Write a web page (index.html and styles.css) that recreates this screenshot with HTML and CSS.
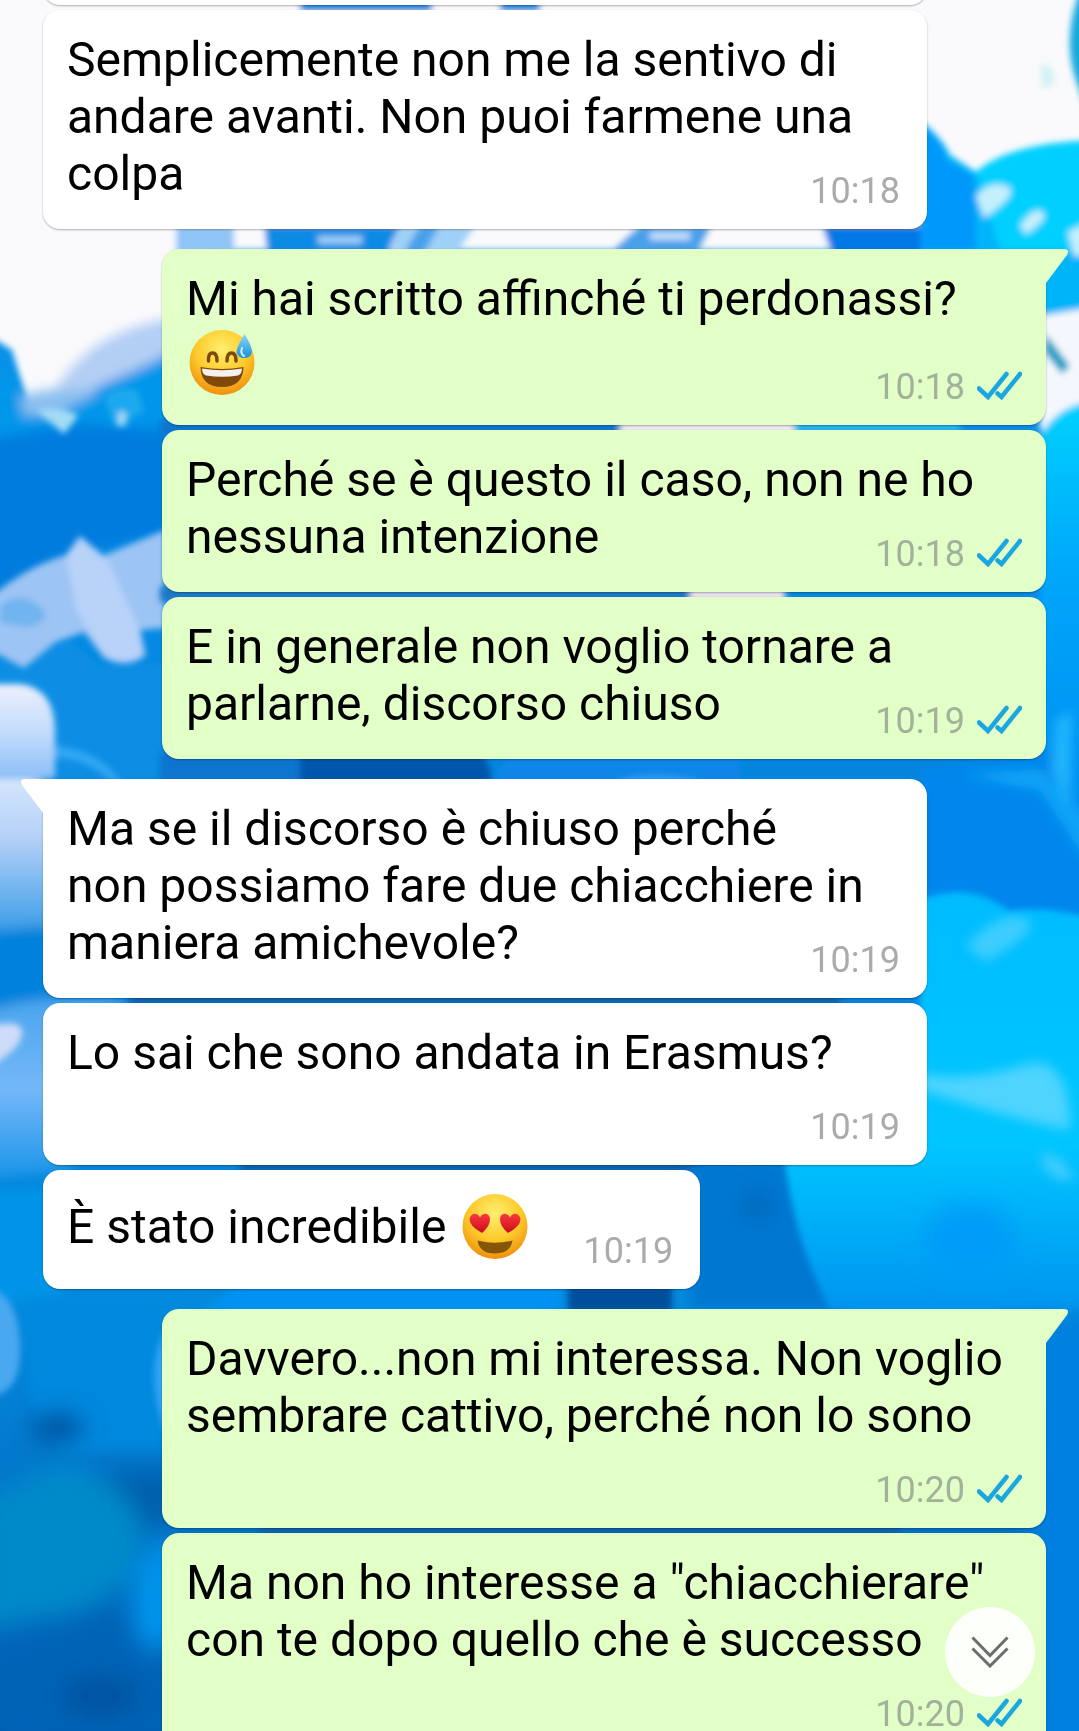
FILE: index.html
```
<!DOCTYPE html>
<html lang="it">
<head>
<meta charset="utf-8">
<meta name="viewport" content="width=device-width, initial-scale=1">
<title>Chat</title>
<link rel="stylesheet" href="styles.css">
</head>
<body>
<svg class="wallpaper" viewBox="0 0 1079 1731" preserveAspectRatio="none" aria-hidden="true">
  <defs>
    <linearGradient id="sea" x1="0" y1="0" x2="0" y2="1">
      <stop offset="0" stop-color="#0a9cf2"/>
      <stop offset=".5" stop-color="#0482dc"/>
      <stop offset=".75" stop-color="#038ade"/>
      <stop offset="1" stop-color="#025cb0"/>
    </linearGradient>
    <linearGradient id="pod" x1="0" y1="0" x2="0" y2="1">
      <stop offset="0" stop-color="#eef0fc"/>
      <stop offset=".5" stop-color="#c4dcfc"/>
      <stop offset="1" stop-color="#8cc0f6"/>
    </linearGradient>
    <linearGradient id="leftPetal" x1="0" y1="0" x2="0" y2="1">
      <stop offset="0" stop-color="#d8e8fc"/>
      <stop offset=".4" stop-color="#b4d0f8"/>
      <stop offset="1" stop-color="#2f98e6"/>
    </linearGradient>
    <linearGradient id="lowPetal" x1="0" y1="0" x2="0" y2="1">
      <stop offset="0" stop-color="#4aa4ee"/>
      <stop offset=".5" stop-color="#74b8f8"/>
      <stop offset="1" stop-color="#1894e8"/>
    </linearGradient>
    <linearGradient id="rightEdge" x1="0" y1="0" x2="0" y2="1">
      <stop offset="0" stop-color="#00d2ff"/>
      <stop offset=".35" stop-color="#00a6fa"/>
      <stop offset="1" stop-color="#0084ec"/>
    </linearGradient>
    <linearGradient id="cloud" x1="0" y1="0" x2="0" y2="1">
      <stop offset="0" stop-color="#00bcff"/>
      <stop offset=".6" stop-color="#00c6ff"/>
      <stop offset="1" stop-color="#0094f0"/>
    </linearGradient>
    <filter id="soft" x="-20%" y="-20%" width="140%" height="140%"><feGaussianBlur stdDeviation="3"/></filter>
    <filter id="mist" x="-20%" y="-20%" width="140%" height="140%"><feGaussianBlur stdDeviation="6"/></filter>
    <filter id="haze" x="-40%" y="-40%" width="180%" height="180%"><feGaussianBlur stdDeviation="12"/></filter>
  </defs>
  <rect width="1079" height="1731" fill="url(#sea)"/>

  <!-- white sky and the splashes under it -->
  <g filter="url(#soft)">
    <path fill="#fafafc" d="M-20-20H1100V250H-20z"/>
    <path fill="#fafafc" d="M-20 200H240L165 330 100 355 78 400 30 410 12 350-20 330z"/>
    <path fill="#0a8ae6" d="M300-10H432V12H300zM500-10H540V12H500z"/>
    <path fill="#8fc4f6" d="M176 225H234V255H176z"/>
    <path fill="#0a8ae6" d="M264 225H400L385 260H268z"/>
    <path fill="#9fd0f8" d="M318 236H362V244H318zM400 225H476L452 260H388z"/>
    <path fill="#4aa0ea" d="M420 225H440L420 260H400zM610 252L640 225H712L694 260z"/>
    <path fill="#c5e0fa" d="M650 232H690V240H650z"/>
    <path fill="#0078e6" d="M822 225H930V255H832z"/>
  </g>

  <!-- left column: foam line and the blue under it -->
  <g filter="url(#mist)">
    <path fill="#b4cff4" d="M50 400C74 350 120 325 175 318V370L80 412z"/>
    <path fill="#0496ea" d="M34 416C70 396 120 380 175 350V470H-20V356C14 370 20 400 34 416z"/>
    <path fill="#8cc0f0" d="M20 396Q60 384 100 392L60 412 24 416z"/>
    <path fill="#007cde" d="M-20 440L80 424 175 430V534L90 550 0 600H-20z"/>
    <path fill="#088ee4" d="M-20 665L70 640 100 665 165 662V780H-20z"/>
    <path fill="url(#leftPetal)" d="M-20 772H34L60 812V930L-20 940z"/>
    <path fill="#0482dc" d="M-20 932L50 926V1000L-20 1012z"/>
    <path fill="url(#lowPetal)" d="M-20 1014Q40 992 125 1000L70 1170-20 1180z"/>
    <path fill="#0494e8" d="M-20 1190H60V1300H-20z"/>
    <path fill="#0489de" d="M26 1296H165V1450L60 1450 30 1400z"/>
  </g>
  <g filter="url(#soft)">
    <path fill="#1aa8ee" d="M104 398q12-14 34-8l6 22-30 14z"/>
    <path fill="#a4dcf6" d="M36 410q24-6 42 6l-14 18zM118 412h8v14h-8z"/>
    <path fill="#9cc4f4" d="M-20 606C20 570 50 560 66 555L80 536 98 558 165 530V628L140 630 146 655Q128 670 104 658L84 632 56 642 24 668-20 645z"/>
    <path fill="#b8d2f8" d="M66 556L80 536 108 560 140 630 142 656Q124 668 104 656L76 610z"/>
    <path fill="#70b4f0" d="M0 605q20-14 38 0t-10 22l-28-4z"/>
    <path fill="#30a8f4" d="M56 746q44 4 66 38h-8q-26-26-58-26z"/>
    <path fill="url(#pod)" d="M-20 684H20Q54 688 55 730V778H-20z"/>
    <path fill="#cddcf8" d="M-10 1026Q24 1018 22 1034T-10 1066z"/>
    <path fill="#4aa8f0" d="M-10 1288Q18 1296 20 1345T-10 1396z"/>
    <path fill="#32a4f6" d="M168 1325Q140 1370 168 1440z"/>
  </g>
  <g filter="url(#haze)">
    <ellipse cx="58" cy="1428" rx="26" ry="14" fill="#01509c"/>
    <path fill="#0260ae" d="M100 1470H180V1530H140z"/>
    <path fill="#008aca" d="M-20 1500L60 1464Q150 1490 140 1550T20 1620L-20 1630z"/>
    <path fill="#0264b6" d="M-20 1660L120 1600 175 1740H-20z"/>
    <ellipse cx="100" cy="1696" rx="40" ry="22" fill="#0054a2"/>
    <path fill="#0296ee" d="M175 1530Q130 1560 134 1610T175 1646z"/>
  </g>

  <!-- gaps between the bubbles -->
  <g filter="url(#soft)">
    <path fill="#0a74cc" d="M160 420H620V436H160z"/>
    <path fill="#f0e8f4" d="M620 418H794V436H620z"/>
    <path fill="#20b4f0" d="M794 420H960V436H794z"/>
    <path fill="#1c78c8" d="M160 586H690V602H160z"/>
    <path fill="#ece4f0" d="M690 586H785V602H690z"/>
    <path fill="#0874d0" d="M160 752H300V786H160z"/>
    <path fill="#0556aa" d="M300 752H480Q495 770 490 786H300z"/>
    <path fill="#0c86e8" d="M495 786Q500 752 530 752H740V786z"/>
    <path fill="#2a9cf4" d="M606 786Q650 764 716 786z"/>
    <path fill="#0a66b4" d="M130 994H840V1008H130z"/>
    <path fill="#0a62ae" d="M240 1161H700V1174H240z"/>
    <path fill="#0492f2" d="M240 1285H560V1312H200z"/>
    <path fill="#04509c" d="M568 1284H672V1312H568z"/>
    <path fill="#0492f0" d="M830 1284H1000V1312H830z"/>
    <path fill="#0a62ae" d="M260 1524H900V1536H260z"/>
  </g>

  <!-- right column -->
  <g filter="url(#soft)">
    <path fill="#00b4fa" d="M920 120Q944 140 950 155L976 172Q1010 142 1100 140V330H920z"/>
    <path fill="#00d0ff" d="M976 172Q1010 142 1100 140V250L1000 250z"/>
    <path fill="#0698fa" d="M920 124Q944 140 946 160L974 176 976 250H920z"/>
    <path fill="#12a8dc" d="M1100-10H1080Q1062 40 1076 80T1100 150z"/>
    <path fill="#c4f0fc" d="M976 196Q990 180 1006 186T984 218zM1020 226Q1034 206 1042 212T1026 234zM1068 232l20-10v34h-14z"/>
    <path fill="#d6f2f6" d="M1040 66q10-6 14 8t-12 14z"/>
    <path fill="#f4f8fe" d="M1040 316L1100 306V400L1050 430H1040z"/>
    <path fill="#14a0c8" d="M1046 334L1070 366 1062 374 1044 352z"/>
    <path fill="url(#rightEdge)" d="M1040 435Q1060 402 1100 400V900H1040z"/>
  </g>
  <g filter="url(#mist)">
    <path fill="#0686ec" d="M920 770L1050 750 1100 850V920H920z"/>
    <path fill="#10a4f8" d="M960 774L1040 790 1100 880V830L1040 770z"/>
    <path fill="#20b6fc" d="M1056 720L1072 710 1070 810 1052 770z"/>
    <path fill="#0578d2" d="M690 1160H800L840 1310H690z"/>
  </g>
  <g filter="url(#soft)">
    <path fill="url(#cloud)" d="M830 1310Q790 1230 784 1150L920 1150V900Q970 880 1010 912 1040 904 1100 920V1310z"/>
  </g>
  <g filter="url(#mist)">
    <path fill="#3cceff" d="M966 946Q1000 910 1024 918T986 962z"/>
    <path fill="#50d4ff" d="M920 1074Q970 1082 1020 1066T1070 1130Q1030 1122 980 1108L920 1090z"/>
    <path fill="#40ccff" d="M1042 1152q26 6 32 28-20 4-32-16z"/>
  </g>
  <g filter="url(#haze)">
    <ellipse cx="970" cy="1240" rx="46" ry="36" fill="#009cf8"/>
    <ellipse cx="758" cy="1206" rx="14" ry="12" fill="#0462b0"/>
    <path fill="#0080e0" d="M1030 1320H1110V1760H1030z"/>
  </g>
</svg>

<svg class="sprites" aria-hidden="true">
  <symbol id="read" viewBox="0 0 45 29">
    <path d="M2 17.500L11 26 29.500 3M20.500 22.500L24.500 26 43 3" fill="none" stroke="#1aa6e0" stroke-width="4.500" stroke-linecap="round" stroke-linejoin="miter"/>
  </symbol>
</svg>

<main class="chat">
  <article class="bubble in previous"></article>

  <article class="bubble in">
    <p class="text">Semplicemente non me la sentivo di andare avanti. Non puoi farmene una colpa</p>
    <footer class="meta"><time>10:18</time></footer>
  </article>

  <article class="bubble out first">
    <svg class="tail" viewBox="0 0 22 34" aria-hidden="true"><path d="M0 0H18Q24 0 21 6L0 34z"/></svg>
    <p class="text">Mi hai scritto affinché ti perdonassi? <svg class="emoji" viewBox="0 0 71 71" role="img" aria-label="Sorriso con goccia di sudore">
      <defs>
        <radialGradient id="skin" cx=".5" cy=".3" r=".72">
          <stop offset="0" stop-color="#ffee70"/><stop offset=".55" stop-color="#fdcb2c"/><stop offset="1" stop-color="#ee8c0c"/>
        </radialGradient>
        <linearGradient id="drop" x1="0" y1="0" x2="0" y2="1"><stop offset="0" stop-color="#8fd8f8"/><stop offset="1" stop-color="#1690dc"/></linearGradient>
      </defs>
      <circle cx="36" cy="35.500" r="32.500" fill="url(#skin)"/>
      <path d="M22.500 34Q22 26 26.500 26T31 34M41 34Q41 26 45.500 26T50 34" fill="none" stroke="#7d4a08" stroke-width="3.500" stroke-linecap="round"/>
      <path d="M14.500 40Q36 44 57.500 40 57 60 36 60T14.500 40z" fill="#80490a"/>
      <path d="M16 41.500Q36 45 56 41.500 56 47 52 48.500 36 51 20 48.500 16 47 16 41.500z" fill="#f4f1ee"/>
      <path d="M58.500 7Q66 19 66 25A8 8 0 0 1 50.500 25Q51 19 58.500 7z" fill="url(#drop)"/>
      <path d="M56 21q-2 6 2 8" fill="none" stroke="#d2f2fe" stroke-width="2" stroke-linecap="round"/>
    </svg></p>
    <footer class="meta"><time>10:18</time><svg class="read" role="img" aria-label="Letto"><use href="#read"/></svg></footer>
  </article>

  <article class="bubble out">
    <p class="text">Perché se è questo il caso, non ne ho nessuna intenzione</p>
    <footer class="meta"><time>10:18</time><svg class="read" role="img" aria-label="Letto"><use href="#read"/></svg></footer>
  </article>

  <article class="bubble out">
    <p class="text">E in generale non voglio tornare a parlarne, discorso chiuso</p>
    <footer class="meta"><time>10:19</time><svg class="read" role="img" aria-label="Letto"><use href="#read"/></svg></footer>
  </article>

  <article class="bubble in first">
    <svg class="tail" viewBox="0 0 22 34" aria-hidden="true"><path d="M22 0H4Q-2 0 1 6L22 34z"/></svg>
    <p class="text">Ma se il discorso è chiuso perché<br>non possiamo fare due chiacchiere in maniera amichevole?</p>
    <footer class="meta"><time>10:19</time></footer>
  </article>

  <article class="bubble in">
    <p class="text">Lo sai che sono andata in Erasmus?</p>
    <footer class="meta"><time>10:19</time></footer>
  </article>

  <article class="bubble in">
    <p class="text">È stato incredibile <svg class="emoji" viewBox="0 0 71 71" role="img" aria-label="Occhi a cuore">
      <defs>
        <linearGradient id="heartFill" x1="0" y1="0" x2="0" y2="1"><stop offset="0" stop-color="#fb3a3c"/><stop offset="1" stop-color="#c80c1c"/></linearGradient>
      </defs>
      <circle cx="37" cy="35.500" r="32.500" fill="url(#skin)"/>
      <path d="M24 42Q11 35 11.500 27.500C13 21.500 20 21 22 26.500 25 20.500 32 22 32 28.500Q32 35 24 42z" fill="url(#heartFill)"/>
      <path d="M50 42Q63 35 62.500 27.500C61 21.500 54 21 52 26.500 49 20.500 42 22 42 28.500Q42 35 50 42z" fill="url(#heartFill)"/>
      <path d="M19.500 49.500Q37 54 54.500 49.500 52.500 62.500 37 62.500T19.500 49.500z" fill="#85550a"/>
    </svg></p>
    <footer class="meta"><time>10:19</time></footer>
  </article>

  <article class="bubble out first">
    <svg class="tail" viewBox="0 0 22 34" aria-hidden="true"><path d="M0 0H18Q24 0 21 6L0 34z"/></svg>
    <p class="text">Davvero...non mi interessa. Non voglio sembrare cattivo, perché non lo sono</p>
    <footer class="meta"><time>10:20</time><svg class="read" role="img" aria-label="Letto"><use href="#read"/></svg></footer>
  </article>

  <article class="bubble out">
    <p class="text">Ma non ho interesse a "chiacchierare" con te dopo quello che è successo</p>
    <footer class="meta"><time>10:20</time><svg class="read" role="img" aria-label="Letto"><use href="#read"/></svg></footer>
  </article>
</main>

<button class="to-bottom" type="button" aria-label="Vai in fondo">
  <svg viewBox="0 0 38 32" aria-hidden="true"><path d="M1.500 1.500L19 19.500 36.500 1.500M1.500 12.500L19 30 36.500 12.500" fill="none" stroke="#6b6f6b" stroke-width="3"/></svg>
</button>
</body>
</html>
```
FILE: styles.css
```
* {
  box-sizing: border-box;
}

body {
  margin: 0;
  background: #0682dc;
  color: #000;
  font-family: Roboto, "Noto Sans", sans-serif;
}

.wallpaper {
  position: fixed;
  inset: 0;
  width: 100%;
  height: 100%;
}

.sprites {
  display: none;
}

.chat {
  position: relative;
  display: flex;
  flex-direction: column;
  gap: 5px;
  height: 100vh;
  padding: 0 33px 0 43px;
  overflow: hidden;
}

.bubble {
  position: relative;
  display: grid;
  flex: none;
  max-width: calc(100% - 119px);
  padding: 21px 24px 24px;
  border-radius: 17px;
  box-shadow: 0 1px 2px rgba(0, 0, 0, 0.3);
}

.in {
  align-self: flex-start;
  padding-right: 27px;
  background: #fff;
}

.out {
  align-self: flex-end;
  background: #e1ffc7;
}

.previous {
  width: 100%;
  height: 48px;
  margin-top: -43px;
}

.first {
  margin-top: 15px;
}

.out.first {
  border-top-right-radius: 0;
}

.in.first {
  border-top-left-radius: 0;
}

.tail {
  position: absolute;
  top: 0;
  width: 22px;
  height: 34px;
}

.out .tail {
  left: 100%;
  fill: #e1ffc7;
}

.in .tail {
  right: 100%;
  fill: #fff;
}

.text {
  grid-area: 1 / 1;
  margin: 0;
  padding-bottom: 3px;
  font-size: 48px;
  line-height: 57px;
}

/* keeps the last line clear of the time stamp */
.text::after {
  content: "";
  display: inline-block;
  width: 144px;
}

.out .text::after {
  width: 190px;
}

.emoji {
  width: 71px;
  height: 71px;
  vertical-align: -19px;
}

.meta {
  grid-area: 1 / 1;
  place-self: end;
  display: flex;
  align-items: center;
  gap: 12px;
  height: 28px;
  color: #a9abad;
  font-size: 36px;
  line-height: 28px;
}

.out .meta {
  color: #a3b19b;
}

.read {
  width: 45px;
  height: 29px;
  margin-bottom: 4px;
}

.to-bottom {
  position: fixed;
  right: 44px;
  bottom: 34px;
  display: grid;
  place-items: center;
  width: 90px;
  height: 90px;
  padding: 0;
  border: 0;
  border-radius: 50%;
  background: #fdfffb;
}

.to-bottom svg {
  width: 38px;
  height: 32px;
}
```
